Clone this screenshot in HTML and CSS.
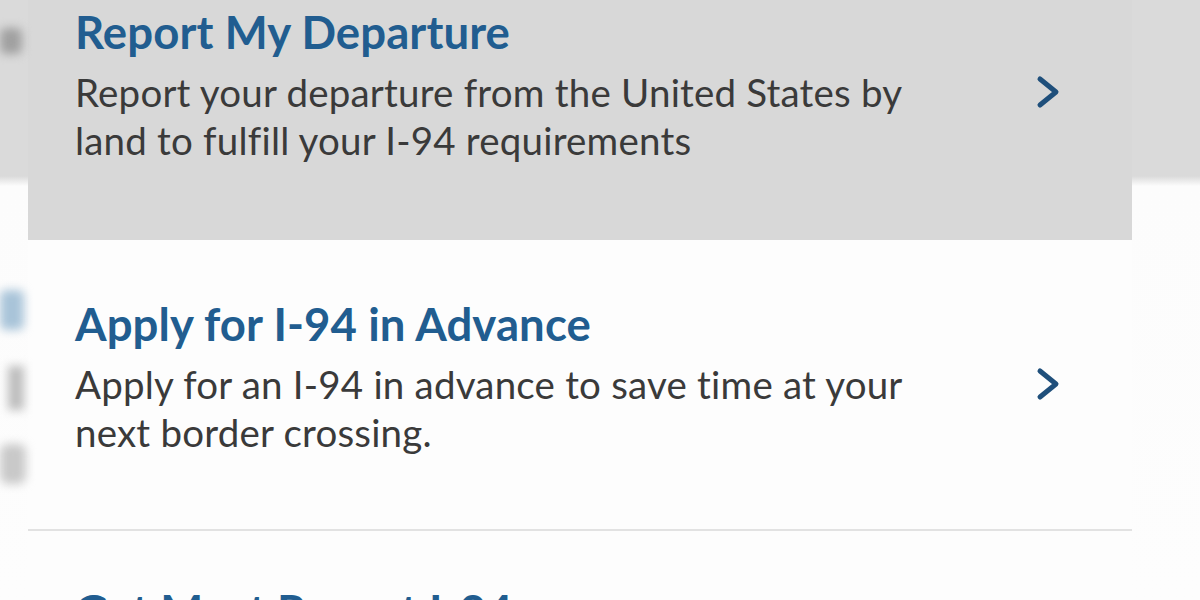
FILE: index.html
```html
<!DOCTYPE html>
<html lang="en">
<head>
<meta charset="utf-8">
<title>I-94</title>
<link rel="stylesheet" href="styles.css">
</head>
<body>
<div class="ghosts">
  <span class="ghost g1"></span>
  <span class="ghost g2"></span>
  <span class="ghost g3"></span>
  <span class="ghost g4"></span>
</div>
<ul class="menu">
  <li class="item active">
    <div class="text">
      <h2 class="title">Report My Departure</h2>
      <p class="desc">Report your departure from the United States by land to fulfill your I-94 requirements</p>
    </div>
    <svg class="chev" viewBox="0 0 26 36" width="26" height="36"><path d="M5 5 L21 18 L5 31" fill="none" stroke="#1f4f7b" stroke-width="5" stroke-linecap="round" stroke-linejoin="round"/></svg>
  </li>
  <li class="item bordered">
    <div class="text">
      <h2 class="title">Apply for I-94 in Advance</h2>
      <p class="desc">Apply for an I-94 in advance to save time at your next border crossing.</p>
    </div>
    <svg class="chev" viewBox="0 0 26 36" width="26" height="36"><path d="M5 5 L21 18 L5 31" fill="none" stroke="#1f4f7b" stroke-width="5" stroke-linecap="round" stroke-linejoin="round"/></svg>
  </li>
  <li class="item last">
    <div class="text">
      <h2 class="title">Get Most Recent I-94</h2>
    </div>
  </li>
</ul>
</body>
</html>
```

FILE: styles.css
```css
html, body {
  margin: 0;
  padding: 0;
}
body {
  width: 1200px;
  height: 600px;
  overflow: hidden;
  position: relative;
  font-family: Lato, "Open Sans", sans-serif;
  background: linear-gradient(to bottom, #dadada 0, #dadada 176px, #fcfcfc 186px, #fdfdfd 100%);
}
.menu {
  list-style: none;
  margin: -54px 68px 0 28px;
  padding: 0;
}
.item {
  display: flex;
  align-items: center;
  justify-content: space-between;
  padding: 62px 71px 74px 47px;
  background: #fdfdfd;
}
.item.active {
  background: #d8d8d8;
  padding-bottom: 76px;
}
.item.bordered {
  border-bottom: 2px solid #e2e2e2;
  padding-top: 60px;
  padding-bottom: 73px;
}
.item.last {
  padding-top: 56px;
}
.text {
  width: 860px;
}
.title {
  margin: 0 0 12px 0;
  font-size: 45.5px;
  line-height: 48px;
  font-weight: 700;
  letter-spacing: 0.1px;
  color: #215d90;
}
.desc {
  margin: 0;
  font-size: 38.5px;
  line-height: 48px;
  font-weight: 400;
  letter-spacing: 0.2px;
  color: #3a3a3a;
}
.chev {
  flex: none;
  display: block;
  margin-top: 12px;
}
.ghosts {
  position: absolute;
  left: 0;
  top: 0;
  width: 30px;
  height: 600px;
}
.ghost {
  position: absolute;
  display: block;
  filter: blur(5px);
}
.g1 { left: 0; top: 28px; width: 22px; height: 26px; background: #a0a0a0; border-radius: 6px; }
.g2 { left: 0; top: 290px; width: 24px; height: 40px; background: #a9c4d9; border-radius: 6px; }
.g3 { left: 8px; top: 366px; width: 16px; height: 44px; background: #bdbdbd; }
.g4 { left: 0; top: 444px; width: 26px; height: 40px; background: #c9c9c9; border-radius: 8px; }
```
